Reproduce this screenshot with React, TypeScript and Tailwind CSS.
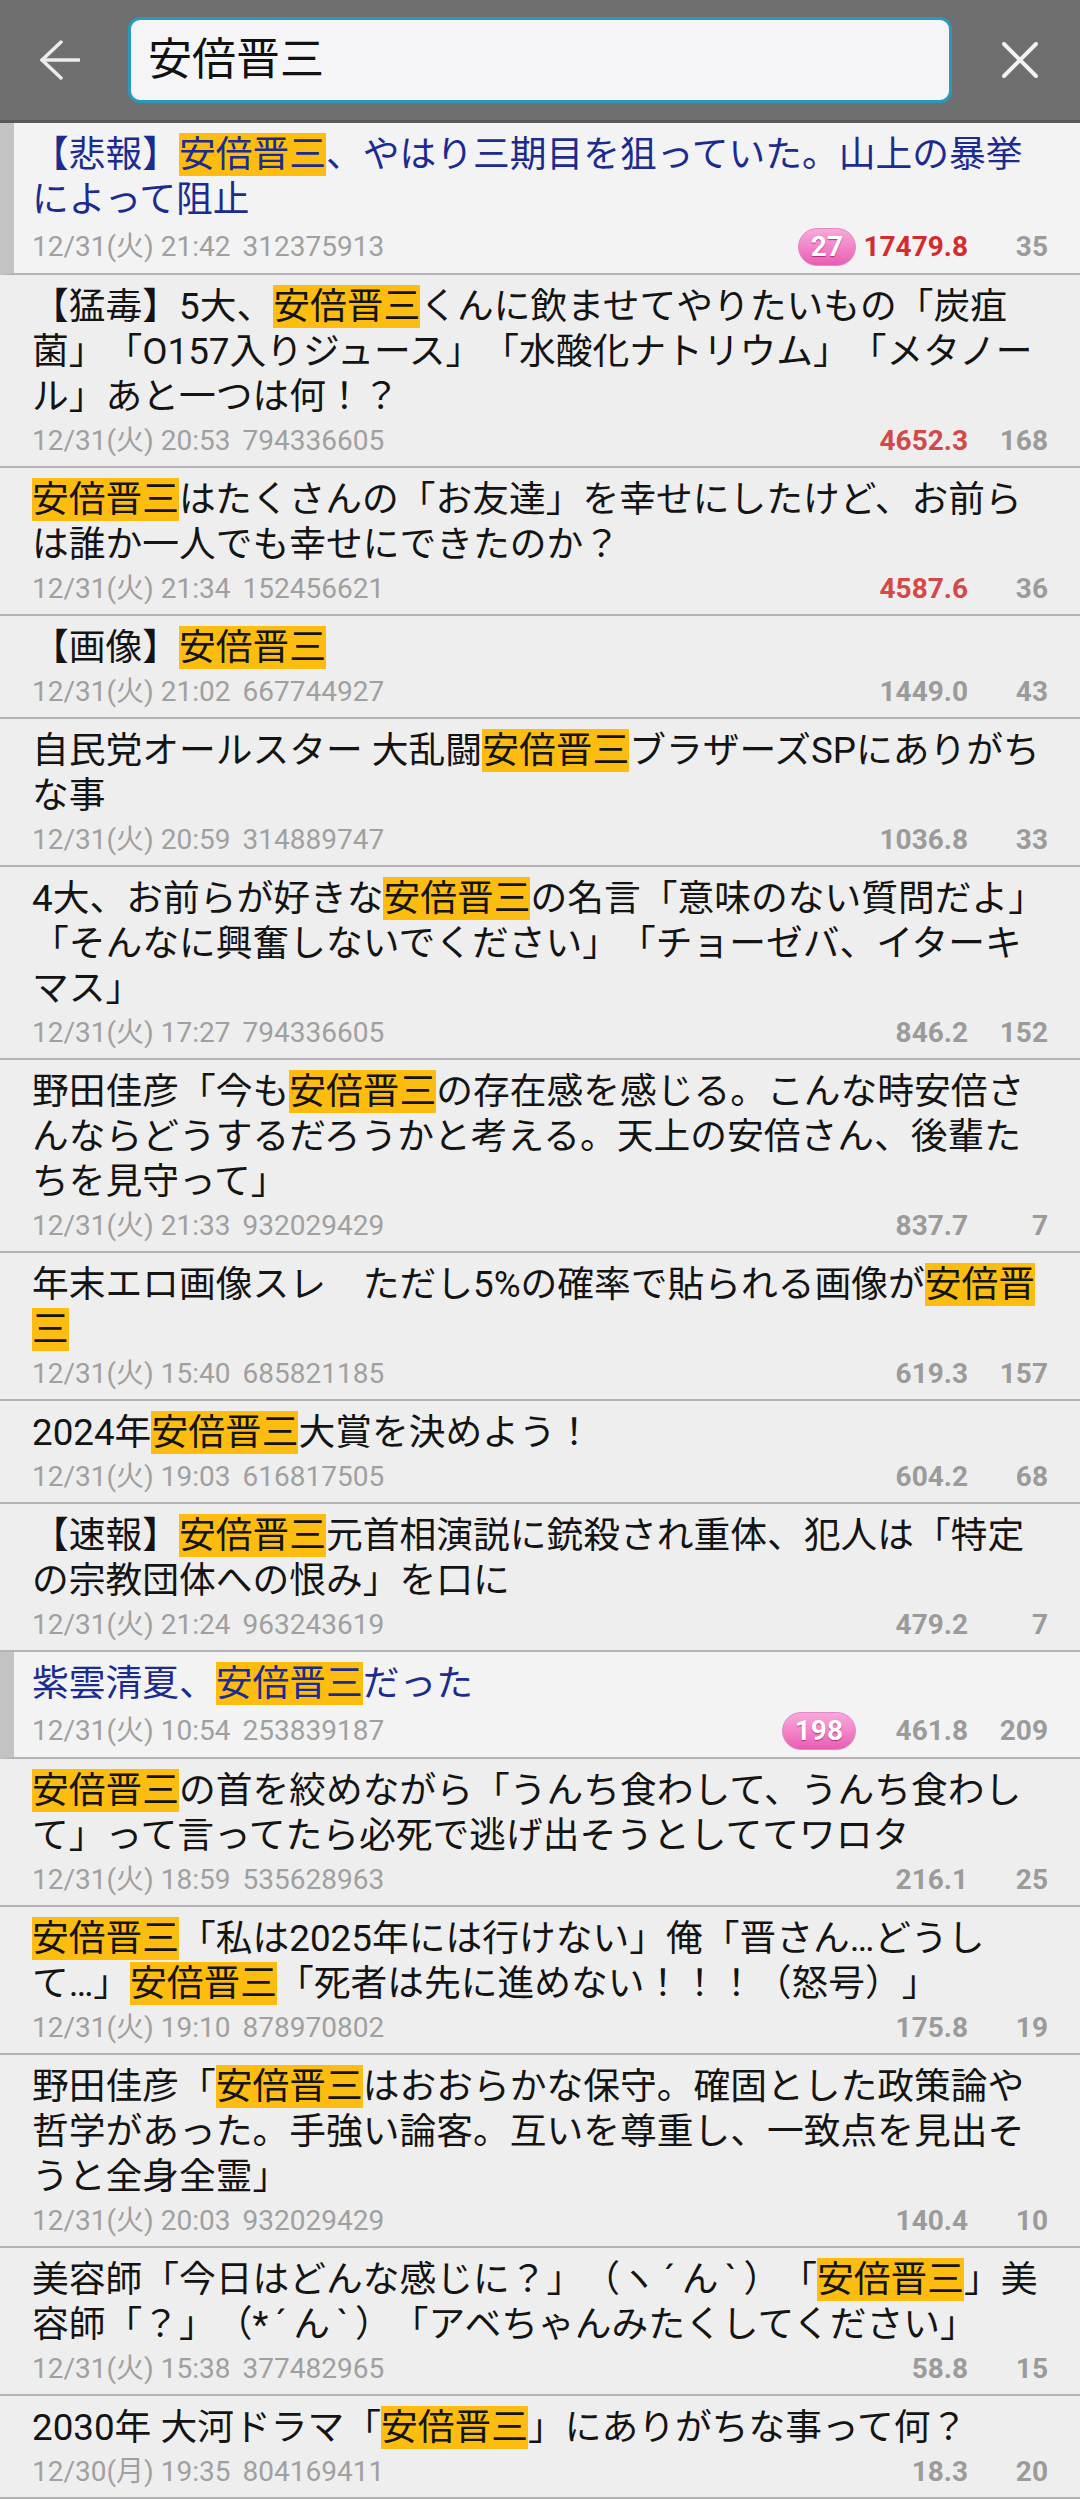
import { Fragment, ReactNode } from "react";

type Thread = {
  title: string;
  date: string;
  id: string;
  speed: string;
  count: number;
  badge?: number;
  hot?: "high" | "mid";
  visited?: boolean;
};

const QUERY = "安倍晋三";

const threads: Thread[] = [
  {
    title: "【悲報】安倍晋三、やはり三期目を狙っていた。山上の暴挙によって阻止",
    date: "12/31(火) 21:42",
    id: "312375913",
    badge: 27,
    speed: "17479.8",
    hot: "high",
    count: 35,
    visited: true,
  },
  {
    title:
      "【猛毒】5大、安倍晋三くんに飲ませてやりたいもの「炭疽菌」「O157入りジュース」「水酸化ナトリウム」「メタノール」あと一つは何！？",
    date: "12/31(火) 20:53",
    id: "794336605",
    speed: "4652.3",
    hot: "mid",
    count: 168,
  },
  {
    title: "安倍晋三はたくさんの「お友達」を幸せにしたけど、お前らは誰か一人でも幸せにできたのか？",
    date: "12/31(火) 21:34",
    id: "152456621",
    speed: "4587.6",
    hot: "mid",
    count: 36,
  },
  {
    title: "【画像】安倍晋三",
    date: "12/31(火) 21:02",
    id: "667744927",
    speed: "1449.0",
    count: 43,
  },
  {
    title: "自民党オールスター 大乱闘安倍晋三ブラザーズSPにありがちな事",
    date: "12/31(火) 20:59",
    id: "314889747",
    speed: "1036.8",
    count: 33,
  },
  {
    title:
      "4大、お前らが好きな安倍晋三の名言「意味のない質問だよ」「そんなに興奮しないでください」「チョーゼバ、イターキマス」",
    date: "12/31(火) 17:27",
    id: "794336605",
    speed: "846.2",
    count: 152,
  },
  {
    title:
      "野田佳彦「今も安倍晋三の存在感を感じる。こんな時安倍さんならどうするだろうかと考える。天上の安倍さん、後輩たちを見守って」",
    date: "12/31(火) 21:33",
    id: "932029429",
    speed: "837.7",
    count: 7,
  },
  {
    title: "年末エロ画像スレ　ただし5%の確率で貼られる画像が安倍晋三",
    date: "12/31(火) 15:40",
    id: "685821185",
    speed: "619.3",
    count: 157,
  },
  {
    title: "2024年安倍晋三大賞を決めよう！",
    date: "12/31(火) 19:03",
    id: "616817505",
    speed: "604.2",
    count: 68,
  },
  {
    title: "【速報】安倍晋三元首相演説に銃殺され重体、犯人は「特定の宗教団体への恨み」を口に",
    date: "12/31(火) 21:24",
    id: "963243619",
    speed: "479.2",
    count: 7,
  },
  {
    title: "紫雲清夏、安倍晋三だった",
    date: "12/31(火) 10:54",
    id: "253839187",
    badge: 198,
    speed: "461.8",
    count: 209,
    visited: true,
  },
  {
    title: "安倍晋三の首を絞めながら「うんち食わして、うんち食わして」って言ってたら必死で逃げ出そうとしててワロタ",
    date: "12/31(火) 18:59",
    id: "535628963",
    speed: "216.1",
    count: 25,
  },
  {
    title: "安倍晋三「私は2025年には行けない」俺「晋さん…どうして…」安倍晋三「死者は先に進めない！！！（怒号）」",
    date: "12/31(火) 19:10",
    id: "878970802",
    speed: "175.8",
    count: 19,
  },
  {
    title:
      "野田佳彦「安倍晋三はおおらかな保守。確固とした政策論や哲学があった。手強い論客。互いを尊重し、一致点を見出そうと全身全霊」",
    date: "12/31(火) 20:03",
    id: "932029429",
    speed: "140.4",
    count: 10,
  },
  {
    title: "美容師「今日はどんな感じに？」（ヽ´ん`）「安倍晋三」美容師「？」（*´ん`）「アベちゃんみたくしてください」",
    date: "12/31(火) 15:38",
    id: "377482965",
    speed: "58.8",
    count: 15,
  },
  {
    title: "2030年 大河ドラマ「安倍晋三」にありがちな事って何？",
    date: "12/30(月) 19:35",
    id: "804169411",
    speed: "18.3",
    count: 20,
  },
];

function Title({ text }: { text: string }) {
  const parts = text.split(/(安倍晋三|´|`)/);
  return (
    <>
      {parts.map((p, i): ReactNode => {
        if (p === QUERY)
          return (
            <span key={i} className="bg-[#fcbd10]">
              {p}
            </span>
          );
        if (p === "´" || p === "`")
          return (
            <span key={i} className="inline-block w-[0.68em] text-center">
              {p}
            </span>
          );
        return <Fragment key={i}>{p}</Fragment>;
      })}
    </>
  );
}

function ThreadRow({ t }: { t: Thread }) {
  const speedColor =
    t.hot === "high"
      ? "text-[#d52b2e]"
      : t.hot === "mid"
        ? "text-[#d44848]"
        : "text-[#9b9b9b]";

  return (
    <div
      className={`border-b-2 border-[#b2b2b2] pt-[9px] pb-[7px] pr-8 ${
        t.visited
          ? "border-l-[14px] border-l-[#c3c3c3] bg-[#f3f3f3] pl-[18px]"
          : "pl-8"
      }`}
    >
      <p
        className={`text-[36.75px] leading-[45px] [text-spacing-trim:space-all] ${
          t.visited ? "text-[#1c2b8e]" : "text-[#141414]"
        }`}
      >
        <Title text={t.title} />
      </p>
      <div
        className={`flex items-center text-[28px] leading-[36px] ${
          t.badge ? "mt-[6px] min-h-[38px]" : "mt-[4px] min-h-[36px]"
        }`}
      >
        <div className="flex flex-1 gap-3 text-[#a0a0a0]">
          <span>{t.date}</span>
          <span>{t.id}</span>
        </div>
        {t.badge && (
          <span className="flex h-[38px] items-center rounded-full border border-[#e487c4] bg-gradient-to-b from-[#f8a9dc] to-[#e95cb4] px-[12px] font-bold text-white [text-shadow:0_1px_1px_rgba(120,0,70,0.6)]">
            {t.badge}
          </span>
        )}
        <span className={`w-[112px] text-right font-bold ${speedColor}`}>
          {t.speed}
        </span>
        <span className="w-[80px] text-right font-bold text-[#9b9b9b]">
          {t.count}
        </span>
      </div>
    </div>
  );
}

function SearchHeader() {
  return (
    <header className="flex h-[123px] items-center border-b-[3px] border-[#585858] bg-[#6f6f6f] pl-10">
      <svg
        width="40"
        height="40"
        viewBox="0 0 40 40"
        fill="none"
        stroke="#ececec"
        strokeWidth="3.5"
        strokeLinecap="round"
        strokeLinejoin="round"
      >
        <path d="M2 20H39" />
        <path d="M21 2L2 20L21 38" />
      </svg>
      <div className="ml-12 flex h-[86px] w-[824px] items-center rounded-[12px] border-[3px] border-[#2699bd] bg-[#f5f5f7] pl-[17px] text-[44px] text-[#111]">
        安倍晋三
      </div>
      <svg
        className="ml-[50px]"
        width="36"
        height="36"
        viewBox="0 0 36 36"
        fill="none"
        stroke="#f2f2f2"
        strokeWidth="4"
        strokeLinecap="round"
      >
        <path d="M2 2L34 34" />
        <path d="M34 2L2 34" />
      </svg>
    </header>
  );
}

export default function App() {
  return (
    <div
      lang="ja"
      className="min-h-screen w-[1080px] bg-[#eeeeee] [font-family:Roboto,'Noto_Sans_CJK_JP',sans-serif]"
    >
      <SearchHeader />
      <div>
        {threads.map((t, i) => (
          <ThreadRow key={i} t={t} />
        ))}
      </div>
    </div>
  );
}
